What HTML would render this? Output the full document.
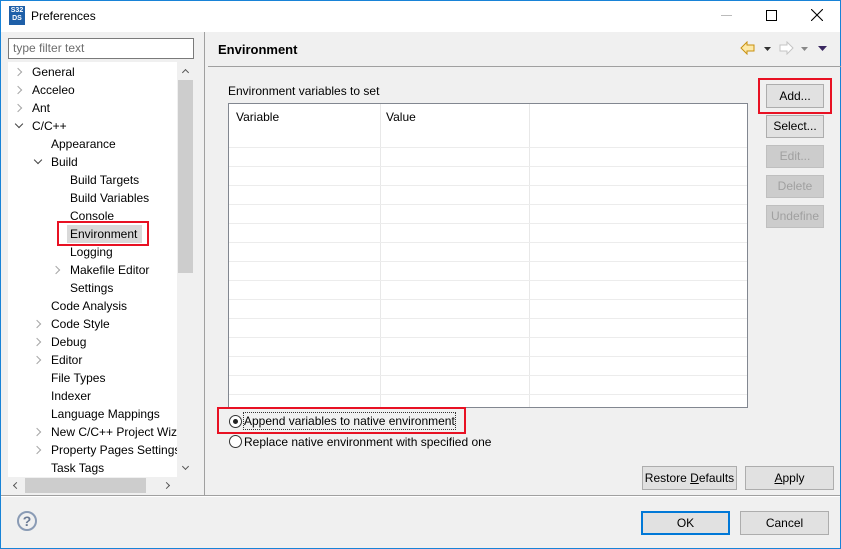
<!DOCTYPE html>
<html><head><meta charset="utf-8"><style>
*{margin:0;padding:0;box-sizing:border-box}
body{width:841px;height:549px;overflow:hidden;background:#f0f0f0;font:12px "Liberation Sans",sans-serif;color:#000;position:relative}
.a{position:absolute}
.t{position:absolute;white-space:nowrap;line-height:18px;height:18px}
.btn{position:absolute;background:#e1e1e1;border:1px solid #adadad;text-align:center;font-size:12px}
.dis{color:#a0a0a0;background:#ccc;border-color:#bfbfbf}
.cr{position:absolute;width:6px;height:6px;border-right:1.5px solid #a6a6a6;border-bottom:1.5px solid #a6a6a6;transform:rotate(-45deg)}
.cd{position:absolute;width:6px;height:6px;border-right:1.5px solid #444;border-bottom:1.5px solid #444;transform:rotate(45deg)}
.red{position:absolute;border:2px solid #e81123}
</style></head><body>
<div class="a" style="left:0;top:0;width:841px;height:549px;border:1px solid #1883d7"></div>
<div class="a" style="left:1px;top:1px;width:839px;height:31px;background:#fff"></div>
<div class="a" style="left:9px;top:6px;width:16px;height:19px;background:#1e5fa8;color:#fff;font:bold 7px/8px 'Liberation Sans';text-align:center;padding-top:1px">S32<br>DS</div>
<div class="t" style="left:31px;top:7px">Preferences</div>
<div class="a" style="left:721px;top:15px;width:11px;height:1px;background:#bbb"></div>
<div class="a" style="left:766px;top:10px;width:11px;height:11px;border:1px solid #000"></div>
<svg class="a" style="left:811px;top:9px" width="12" height="12"><path d="M0 0L12 12M12 0L0 12" stroke="#000" stroke-width="1.1"/></svg>

<!-- left -->
<div class="a" style="left:8px;top:38px;width:186px;height:21px;background:#fff;border:1px solid #7a7a7a"></div>
<div class="t" style="left:13px;top:39px;color:#6d6d6d">type filter text</div>
<div class="a" style="left:8px;top:62px;width:186px;height:432px;background:#fff"></div>
<div class="a" style="left:177px;top:62px;width:17px;height:415px;background:#f0f0f0"></div>
<div class="a" style="left:178px;top:80px;width:15px;height:193px;background:#cdcdcd"></div>
<div class="a" style="left:183px;top:70px;width:5px;height:5px;border-left:1.5px solid #555;border-top:1.5px solid #555;transform:rotate(45deg)"></div>
<div class="a" style="left:183px;top:464px;width:5px;height:5px;border-right:1.5px solid #555;border-bottom:1.5px solid #555;transform:rotate(45deg)"></div>
<div class="a" style="left:8px;top:477px;width:186px;height:17px;background:#f0f0f0"></div>
<div class="a" style="left:25px;top:478px;width:121px;height:15px;background:#cdcdcd"></div>
<div class="a" style="left:14px;top:483px;width:5px;height:5px;border-left:1.5px solid #555;border-bottom:1.5px solid #555;transform:rotate(45deg)"></div>
<div class="a" style="left:164px;top:483px;width:5px;height:5px;border-right:1.5px solid #555;border-top:1.5px solid #555;transform:rotate(45deg)"></div>
<div class="a" style="left:204px;top:32px;width:1px;height:463px;background:#a0a0a0"></div>

<div class="a" style="left:67px;top:225px;width:75px;height:18px;background:#d9d9d9"></div>
<div class="red" style="left:57px;top:221px;width:92px;height:25px"></div>

<div class="cr" style="left:15px;top:69px"></div><div class="t" style="left:32px;top:63px">General</div>
<div class="cr" style="left:15px;top:87px"></div><div class="t" style="left:32px;top:81px">Acceleo</div>
<div class="cr" style="left:15px;top:105px"></div><div class="t" style="left:32px;top:99px">Ant</div>
<div class="cd" style="left:16px;top:121px"></div><div class="t" style="left:32px;top:117px">C/C++</div>
<div class="t" style="left:51px;top:135px">Appearance</div>
<div class="cd" style="left:35px;top:157px"></div><div class="t" style="left:51px;top:153px">Build</div>
<div class="t" style="left:70px;top:171px">Build Targets</div>
<div class="t" style="left:70px;top:189px">Build Variables</div>
<div class="t" style="left:70px;top:207px">Console</div>
<div class="t" style="left:70px;top:225px">Environment</div>
<div class="t" style="left:70px;top:243px">Logging</div>
<div class="cr" style="left:53px;top:267px"></div><div class="t" style="left:70px;top:261px">Makefile Editor</div>
<div class="t" style="left:70px;top:279px">Settings</div>
<div class="t" style="left:51px;top:297px">Code Analysis</div>
<div class="cr" style="left:34px;top:321px"></div><div class="t" style="left:51px;top:315px">Code Style</div>
<div class="cr" style="left:34px;top:339px"></div><div class="t" style="left:51px;top:333px">Debug</div>
<div class="cr" style="left:34px;top:357px"></div><div class="t" style="left:51px;top:351px">Editor</div>
<div class="t" style="left:51px;top:369px">File Types</div>
<div class="t" style="left:51px;top:387px">Indexer</div>
<div class="t" style="left:51px;top:405px">Language Mappings</div>
<div class="cr" style="left:34px;top:429px"></div><div class="t" style="left:51px;top:423px;width:126px;overflow:hidden">New C/C++ Project Wizard</div>
<div class="cr" style="left:34px;top:447px"></div><div class="t" style="left:51px;top:441px;width:126px;overflow:hidden">Property Pages Settings</div>
<div class="t" style="left:51px;top:459px">Task Tags</div>

<!-- right header -->
<div class="t" style="left:218px;top:41px;font-weight:bold;font-size:13px">Environment</div>
<div class="a" style="left:208px;top:66px;width:633px;height:1px;background:#a0a0a0"></div>
<svg class="a" style="left:740px;top:41px" width="90" height="14">
<path d="M1 7L7 1V4H14V10H7V13Z" fill="#fde9a8" stroke="#c8900e"/>
<path d="M24 6h7l-3.5 4z" fill="#333"/>
<path d="M53 7L47 1V4H40V10H47V13Z" fill="#fff" stroke="#c4c4c4"/>
<path d="M61 6h7l-3.5 4z" fill="#888"/>
<path d="M78 5h9l-4.5 5z" fill="#3a2760"/>
</svg>

<div class="t" style="left:228px;top:82px">Environment variables to set</div>
<div class="a" style="left:228px;top:103px;width:520px;height:305px;background:#fff;border:1px solid #828790"></div>
<div class="a" style="left:380px;top:104px;width:1px;height:303px;background:#e8e8e8"></div>
<div class="a" style="left:529px;top:104px;width:1px;height:303px;background:#e8e8e8"></div>
<div class="t" style="left:236px;top:108px">Variable</div>
<div class="t" style="left:386px;top:108px">Value</div>
<div class="a" style="left:229px;top:129px;width:518px;height:278px;background:repeating-linear-gradient(to bottom,transparent 0,transparent 18px,#ececec 18px,#ececec 19px)"></div>

<div class="btn" style="left:766px;top:84px;width:58px;height:24px;line-height:22px">Add...</div>
<div class="red" style="left:758px;top:78px;width:74px;height:36px"></div>
<div class="btn" style="left:766px;top:115px;width:58px;height:23px;line-height:21px">Select...</div>
<div class="btn dis" style="left:766px;top:145px;width:58px;height:23px;line-height:21px">Edit...</div>
<div class="btn dis" style="left:766px;top:175px;width:58px;height:23px;line-height:21px">Delete</div>
<div class="btn dis" style="left:766px;top:205px;width:58px;height:23px;line-height:21px">Undefine</div>

<div class="a" style="left:229px;top:415px;width:13px;height:13px;border:1px solid #333;border-radius:50%;background:#fff"></div>
<div class="a" style="left:233px;top:419px;width:5px;height:5px;border-radius:50%;background:#222"></div>
<div class="a" style="left:243px;top:412px;width:213px;height:18px;border:1px dotted #333"></div>
<div class="t" style="left:244px;top:412px">Append variables to native environment</div>
<div class="red" style="left:217px;top:407px;width:249px;height:27px"></div>
<div class="a" style="left:229px;top:435px;width:13px;height:13px;border:1px solid #333;border-radius:50%;background:#fff"></div>
<div class="t" style="left:244px;top:433px">Replace native environment with specified one</div>

<div class="btn" style="left:642px;top:466px;width:95px;height:24px;line-height:22px">Restore <u>D</u>efaults</div>
<div class="btn" style="left:745px;top:466px;width:89px;height:24px;line-height:22px"><u>A</u>pply</div>

<div class="a" style="left:1px;top:495px;width:839px;height:1px;background:#a0a0a0"></div>
<div class="a" style="left:1px;top:496px;width:839px;height:1px;background:#fff"></div>
<div class="a" style="left:17px;top:511px;width:20px;height:20px;border:2px solid #8a9bb5;border-radius:50%;color:#6a7a95;font:bold 14px/16px 'Liberation Sans';text-align:center">?</div>
<div class="btn" style="left:641px;top:511px;width:89px;height:24px;line-height:20px;border:2px solid #0078d7">OK</div>
<div class="btn" style="left:740px;top:511px;width:89px;height:24px;line-height:22px">Cancel</div>
</body></html>
